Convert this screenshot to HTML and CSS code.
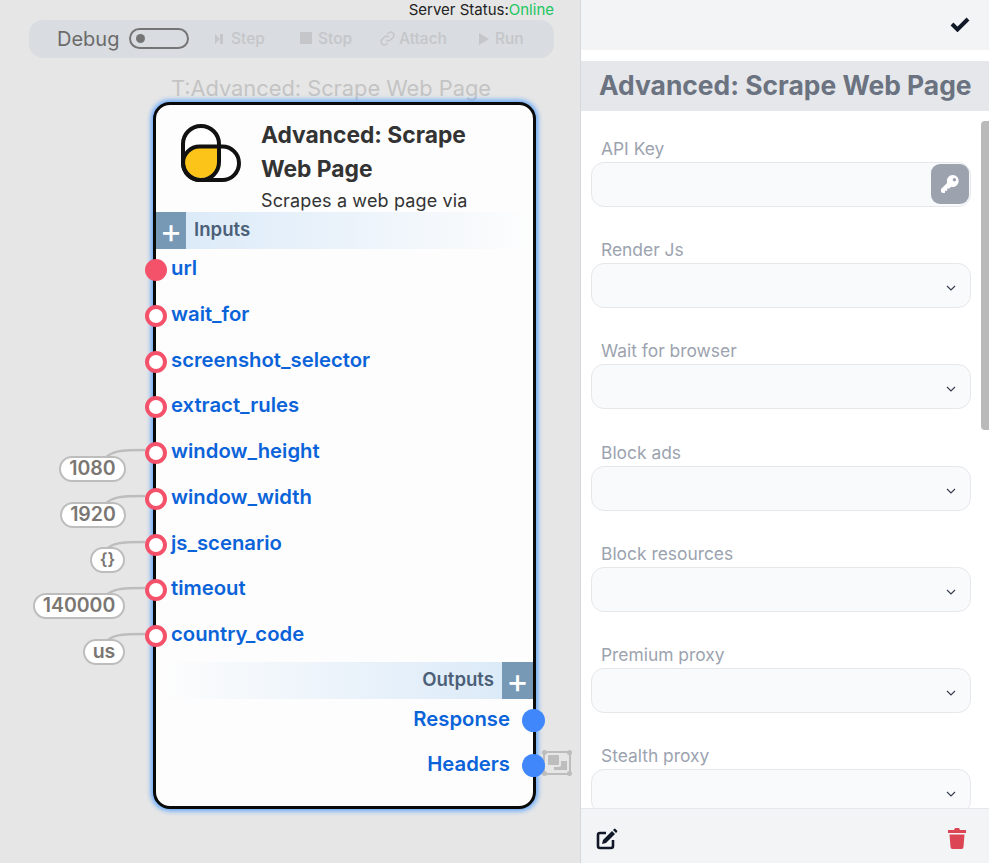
FILE: index.html
```html
<!DOCTYPE html>
<html lang="en">
<head>
    <meta charset="UTF-8">
    <title>Advanced: Scrape Web Page</title>
    <link rel="stylesheet" href="styles.css">
</head>
<body>
    <div class="canvas">
        <div class="server-status">Server Status:<span class="online">Online</span></div>

        <div class="toolbar">
            <span class="debug-label">Debug</span>
            <span class="switch"><span class="switch-dot"></span></span>
            <span class="tool tool-step">
                <svg width="12" height="14" viewBox="0 0 12 14"><path d="M1 2l5 5-5 5zM6 2h3v10H6z" fill="#c4c6c9"/></svg>Step
            </span>
            <span class="tool tool-stop">
                <svg width="13" height="13" viewBox="0 0 13 13"><rect width="12" height="12" fill="#c4c6c9"/></svg>Stop
            </span>
            <span class="tool tool-attach">
                <svg width="17" height="17" viewBox="0 0 16 16" fill="none" stroke="#c4c6c9" stroke-width="1.4"><path d="M6.800 9.200a3 3 0 0 0 4.200 0l2.400-2.400a3 3 0 0 0-4.200-4.200L8 3.800"/><path d="M9.200 6.800a3 3 0 0 0-4.200 0L2.600 9.200a3 3 0 0 0 4.200 4.200L8 12.200"/></svg>Attach
            </span>
            <span class="tool tool-run">
                <svg width="12" height="14" viewBox="0 0 12 14"><path d="M1 1l10 6-10 6z" fill="#c4c6c9"/></svg>Run
            </span>
        </div>

        <div class="node-caption">T:Advanced: Scrape Web Page</div>

        <svg class="wires" width="150" height="863" fill="none" stroke="#bdbdbd" stroke-width="2.500">
            <path d="M105 458c8-7 14-8 40-8"/>
            <path d="M105 504c8-7 14-8 40-8"/>
            <path d="M105 550c8-7 14-8 40-8"/>
            <path d="M105 596c8-7 14-8 40-8"/>
            <path d="M105 642c8-7 14-8 40-8"/>
        </svg>
        <span class="pill pill-1080">1080</span>
        <span class="pill pill-1920">1920</span>
        <span class="pill pill-js">{}</span>
        <span class="pill pill-timeout">140000</span>
        <span class="pill pill-us">us</span>

        <svg class="group-icon" width="30" height="26" viewBox="0 0 30 26">
            <rect x="2" y="2" width="26" height="22" fill="none" stroke="#bdbdbd" stroke-width="2"/>
            <g fill="#bdbdbd">
                <circle cx="2.500" cy="2.500" r="2.500"/><circle cx="27.500" cy="2.500" r="2.500"/>
                <circle cx="2.500" cy="23.500" r="2.500"/><circle cx="27.500" cy="23.500" r="2.500"/>
                <rect x="6" y="5" width="11" height="10" rx="1"/>
                <path d="M19 11h6v9H12v-3h5a2 2 0 0 0 2-2z"/>
            </g>
        </svg>

        <div class="node">
            <div class="node-head">
                <svg class="node-icon" width="62" height="60" viewBox="0 0 62 60">
                    <path d="M3 31V20a18 18 0 0 1 36 0v5H21A18 18 0 0 0 3 40z" fill="#fff"/>
                    <path d="M21 57h20a16 16 0 0 0 0-32H39v14a18 18 0 0 1-18 18z" fill="#fff"/>
                    <path d="M21 25h18v14a18 16 0 0 1-36 0v-1a14 13 0 0 1 18-13z" fill="#fcc419"/>
                    <rect x="3" y="3" width="36" height="54" rx="18" fill="none" stroke="#111" stroke-width="4"/>
                    <rect x="3" y="23.500" width="56" height="33.500" rx="16.700" fill="none" stroke="#111" stroke-width="4"/>
                </svg>
                <div class="node-text">
                    <div class="node-title">Advanced: Scrape Web Page</div>
                    <div class="node-desc">Scrapes a web page via</div>
                </div>
            </div>

            <div class="group-bar group-inputs">
                <span class="group-plus">+</span>
                <span class="group-label">Inputs</span>
            </div>
            <div class="inputs">
                <div class="port-row"><span class="port port-filled"></span>url</div>
                <div class="port-row"><span class="port"></span>wait_for</div>
                <div class="port-row"><span class="port"></span>screenshot_selector</div>
                <div class="port-row"><span class="port"></span>extract_rules</div>
                <div class="port-row"><span class="port"></span>window_height</div>
                <div class="port-row"><span class="port"></span>window_width</div>
                <div class="port-row"><span class="port"></span>js_scenario</div>
                <div class="port-row"><span class="port"></span>timeout</div>
                <div class="port-row"><span class="port"></span>country_code</div>
            </div>

            <div class="group-bar group-outputs">
                <span class="group-label">Outputs</span>
                <span class="group-plus">+</span>
            </div>
            <div class="outputs">
                <div class="port-row port-out">Response<span class="port-blue"></span></div>
                <div class="port-row port-out">Headers<span class="port-blue"></span></div>
            </div>
        </div>
    </div>

    <aside class="panel">
        <div class="panel-top">
            <svg width="20" height="16" viewBox="0 0 20 16"><path d="M2 8l5.500 5.500L18 3" fill="none" stroke="#111827" stroke-width="4"/></svg>
        </div>
        <h2 class="panel-title">Advanced: Scrape Web Page</h2>
        <div class="panel-body">
            <div class="field">
                <label>API Key</label>
                <div class="control">
                    <button class="key-btn">
                        <svg width="20" height="20" viewBox="0 0 20 20"><path d="M12.800 1a6 6 0 0 0-5.700 7.900L1 15v2.800L2.200 19H5v-2.200h2.200v-2.200h2.200l1.800-1.800A6 6 0 1 0 12.800 1zm1.600 3a1.700 1.700 0 1 1 0 3.400 1.700 1.700 0 0 1 0-3.400z" fill="#fff"/></svg>
                    </button>
                </div>
            </div>
            <div class="field"><label>Render Js</label><div class="control"><svg class="chevron" width="10" height="6" viewBox="0 0 10 6"><path d="M1 1l4 4 4-4" fill="none" stroke="#374151" stroke-width="1.200"/></svg></div></div>
            <div class="field"><label>Wait for browser</label><div class="control"><svg class="chevron" width="10" height="6" viewBox="0 0 10 6"><path d="M1 1l4 4 4-4" fill="none" stroke="#374151" stroke-width="1.200"/></svg></div></div>
            <div class="field"><label>Block ads</label><div class="control"><svg class="chevron" width="10" height="6" viewBox="0 0 10 6"><path d="M1 1l4 4 4-4" fill="none" stroke="#374151" stroke-width="1.200"/></svg></div></div>
            <div class="field"><label>Block resources</label><div class="control"><svg class="chevron" width="10" height="6" viewBox="0 0 10 6"><path d="M1 1l4 4 4-4" fill="none" stroke="#374151" stroke-width="1.200"/></svg></div></div>
            <div class="field"><label>Premium proxy</label><div class="control"><svg class="chevron" width="10" height="6" viewBox="0 0 10 6"><path d="M1 1l4 4 4-4" fill="none" stroke="#374151" stroke-width="1.200"/></svg></div></div>
            <div class="field"><label>Stealth proxy</label><div class="control"><svg class="chevron" width="10" height="6" viewBox="0 0 10 6"><path d="M1 1l4 4 4-4" fill="none" stroke="#374151" stroke-width="1.200"/></svg></div></div>
            <div class="scroll-thumb"></div>
        </div>
        <div class="panel-bottom">
            <svg width="22" height="22" viewBox="0 0 22 22" fill="none"><path d="M10 5H4a2 2 0 0 0-2 2v11a2 2 0 0 0 2 2h11a2 2 0 0 0 2-2v-6" stroke="#111827" stroke-width="2.600"/><path d="M7 12l9-9 3 3-9 9-4 1z" fill="#111827"/><path d="M17 2l1-1a1 1 0 0 1 1.500 0l1.500 1.500a1 1 0 0 1 0 1.500l-1 1z" fill="#111827"/></svg>
            <svg width="18" height="21" viewBox="0 0 18 21"><path d="M6 2l1-2h4l1 2h6v3H0V2z" fill="#dc4654"/><path d="M1.500 6.500h15L15.500 19a2 2 0 0 1-2 2h-9a2 2 0 0 1-2-2z" fill="#dc4654"/></svg>
        </div>
    </aside>
</body>
</html>
```

FILE: styles.css
```css
* {
    box-sizing: border-box;
}
html, body {
    height: 100%;
}
body {
    margin: 0;
    display: flex;
    overflow: hidden;
    font-family: 'Inter', 'Liberation Sans', sans-serif;
    background-color: #e6e6e6;
}

/* free canvas, everything in here sits where the graph put it */
.canvas {
    position: relative;
    flex: 0 0 580px;
    height: 863px;
}
.server-status {
    position: absolute;
    top: 1px;
    right: 26px;
    font-size: 15px;
    line-height: 18px;
    color: #222;
}
.online {
    color: #22c55e;
}
.toolbar {
    position: absolute;
    left: 29px;
    top: 20px;
    width: 525px;
    height: 38px;
    border-radius: 14px;
    background-color: #d9dce0;
}
.debug-label {
    position: absolute;
    left: 28px;
    top: 7px;
    font-size: 20px;
    line-height: 24px;
    color: #6b6b6b;
}
.switch {
    position: absolute;
    left: 100px;
    top: 8px;
    width: 60px;
    height: 21px;
    border: 2px solid #757575;
    border-radius: 11px;
}
.switch-dot {
    display: block;
    width: 9px;
    height: 9px;
    margin: 4px 0 0 5px;
    border-radius: 50%;
    background-color: #757575;
}
.tool {
    position: absolute;
    top: 8px;
    display: flex;
    align-items: center;
    gap: 5px;
    font-size: 15.500px;
    font-weight: 500;
    line-height: 21px;
    color: #c4c6c9;
}
.tool-step { left: 185px; }
.tool-stop { left: 271px; }
.tool-attach { left: 350px; gap: 3px; }
.tool-run { left: 449px; }

.node-caption {
    position: absolute;
    left: 171px;
    top: 75px;
    font-size: 21.800px;
    line-height: 27px;
    color: #c4c4c4;
}
.wires {
    position: absolute;
    left: 0;
    top: 0;
}
.pill {
    position: absolute;
    height: 26px;
    border: 2.500px solid #bdbdbd;
    border-radius: 13px;
    background-color: #fff;
    font-size: 19.500px;
    font-weight: 600;
    line-height: 21px;
    text-align: center;
    color: #7a7672;
}
.pill-1080 { left: 59px; top: 456px; width: 67px; }
.pill-1920 { left: 60px; top: 502px; width: 66px; }
.pill-js { left: 90px; top: 547px; width: 35px; font-size: 17px; }
.pill-timeout { left: 33px; top: 593px; width: 92px; }
.pill-us { left: 83px; top: 639px; width: 42px; }

.group-icon {
    position: absolute;
    left: 542px;
    top: 750px;
}
.node {
    position: absolute;
    left: 153px;
    top: 102px;
    width: 383px;
    height: 707px;
    border: 3px solid #0a0a0a;
    border-radius: 17px;
    background-color: #fdfdfd;
    box-shadow: 0 0 5px 2px #60a5fa;
}
.node-head {
    display: flex;
    height: 107px;
    padding: 18px 0 0 24px;
}
.node-icon {
    flex: none;
    margin-right: 19px;
}
.node-title {
    width: 250px;
    margin-top: -5px;
    font-size: 22.800px;
    font-weight: 700;
    line-height: 34px;
    color: #333;
}
.node-desc {
    margin-top: 3px;
    font-size: 18px;
    line-height: 24px;
    letter-spacing: 0.140px;
    color: #333;
}
.group-bar {
    display: flex;
    height: 37px;
    font-size: 18.600px;
    font-weight: 600;
    line-height: 35px;
    color: #4b6078;
}
.group-inputs {
    background: linear-gradient(90deg, #d9e9f8 0%, #fdfdfd 100%);
}
.group-outputs {
    justify-content: flex-end;
    background: linear-gradient(270deg, #d9e9f8 0%, #fdfdfd 100%);
}
.group-plus {
    width: 30px;
    background-color: #7799b5;
    font-size: 34px;
    font-weight: 400;
    line-height: 38px;
    text-align: center;
    color: #fff;
}
.group-outputs .group-plus { width: 31px; }
.group-inputs .group-label { margin-left: 8px; }
.group-outputs .group-label { margin-right: 8px; }

.inputs {
    height: 413px;
}
.port-row {
    position: relative;
    height: 45.750px;
    padding-left: 15px;
    font-size: 20.300px;
    font-weight: 600;
    line-height: 38.500px;
    color: #0b63d9;
}
.port {
    position: absolute;
    left: -11px;
    top: 10px;
    width: 22px;
    height: 22px;
    border: 4.500px solid #f4526a;
    border-radius: 50%;
    background-color: #fff;
}
.port-filled {
    background-color: #f4526a;
}
.outputs {
    padding-top: 1px;
}
.port-out {
    height: 45px;
    padding: 0 23px 0 0;
    line-height: 38px;
    text-align: right;
}
.port-blue {
    position: absolute;
    right: -12px;
    top: 9px;
    width: 23px;
    height: 23px;
    border-radius: 50%;
    background-color: #3f87fb;
}

/* right side panel */
.panel {
    display: flex;
    flex-direction: column;
    flex: 1;
    height: 863px;
    border-left: 1px solid #d5d8dd;
    background-color: #fff;
}
.panel-top {
    display: flex;
    flex: none;
    justify-content: flex-end;
    align-items: center;
    height: 50px;
    padding: 0 19px 2px 0;
    background-color: #f3f4f6;
}
.panel-title {
    flex: none;
    height: 50px;
    margin: 11px 0 0;
    padding-left: 18px;
    background-color: #e5e7eb;
    font-size: 26.400px;
    font-weight: 700;
    line-height: 48px;
    white-space: nowrap;
    color: #6b7280;
}
.panel-body {
    position: relative;
    flex: 1;
    overflow: hidden;
    padding: 26px 18px 0 10px;
}
.field {
    height: 101.200px;
}
.field label {
    display: block;
    padding-left: 10px;
    font-size: 17.400px;
    line-height: 24px;
    color: #9ca3af;
}
.control {
    position: relative;
    height: 45px;
    margin-top: 1px;
    border: 1px solid #e5e7eb;
    border-radius: 13px;
    background-color: #f9fafb;
}
.key-btn {
    position: absolute;
    right: 1px;
    top: 1px;
    display: flex;
    justify-content: center;
    align-items: center;
    width: 38px;
    height: 40px;
    padding: 0;
    border: none;
    border-radius: 9px;
    background-color: #9ca3af;
}
.chevron {
    position: absolute;
    right: 14px;
    top: 21px;
}
.scroll-thumb {
    position: absolute;
    right: 0;
    top: 10px;
    width: 8px;
    height: 309px;
    border-radius: 4px 0 0 4px;
    background-color: #bababa;
}
.panel-bottom {
    display: flex;
    flex: none;
    justify-content: space-between;
    align-items: center;
    height: 55px;
    padding: 5px 23px 0 15px;
    border-top: 1px solid #e5e7eb;
    background-color: #f3f4f6;
}
```
